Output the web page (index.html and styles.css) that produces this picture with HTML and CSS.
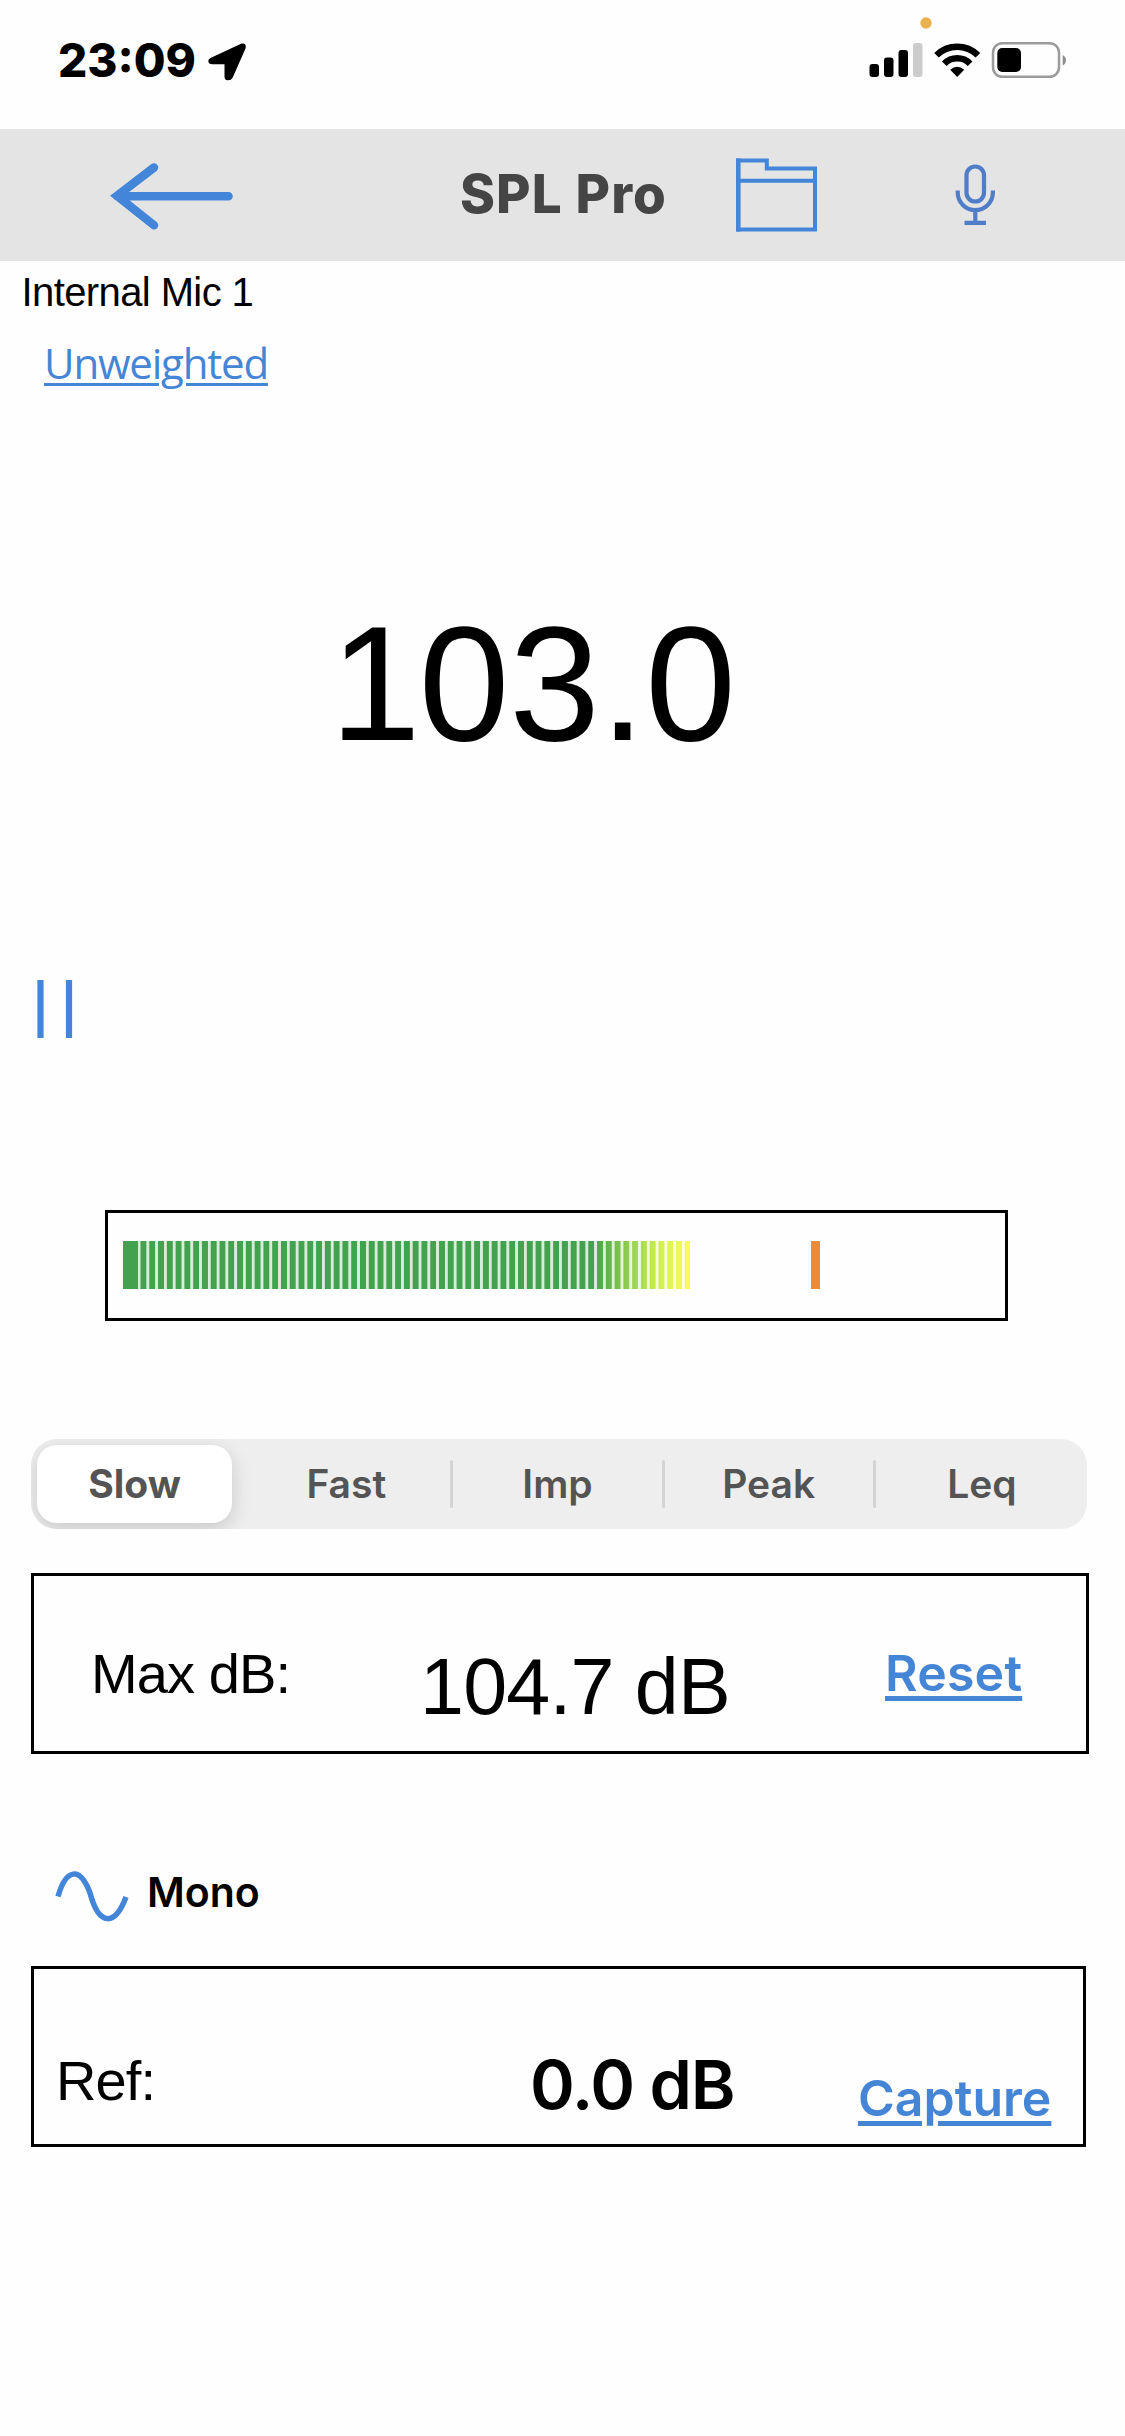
FILE: index.html
```html
<!DOCTYPE html>
<html lang="en">
<head>
    <meta charset="UTF-8">
    <meta name="viewport" content="width=device-width, initial-scale=1.0">
    <title>SPL Pro</title>
    <link rel="stylesheet" href="styles.css">
</head>
<body>
    <div class="status-bar">
        <span class="time">23:09</span>
        <svg class="location" width="38" height="38" viewBox="0 0 38 38">
            <path d="M2.5 15 L33 0.800 Q38.800 -1 37.500 5.500 L24.500 35 Q23 37.500 19.500 37.300 Q16.500 37 16.500 33.500 V21.300 H4.500 Q0.500 21.300 0.300 18 Q0.300 16 2.500 15 Z"/>
        </svg>
        <svg class="status-icons" width="200" height="66" viewBox="868 14 200 66">
            <circle cx="926" cy="23" r="5.700" fill="#ecb14f"/>
            <rect x="869.500" y="64" width="9.500" height="13" rx="3"/>
            <rect x="884" y="57.500" width="9.500" height="19.500" rx="3"/>
            <rect x="898.500" y="50" width="9.500" height="27" rx="3"/>
            <rect x="913" y="43" width="9.500" height="34" rx="3" fill="#cccccc"/>
            <g fill="none" stroke="#000" stroke-width="6.500">
                <path d="M936.500 55.300 A29.500 29.500 0 0 1 977.900 55.300"/>
                <path d="M944.300 63.700 A18 18 0 0 1 970.100 63.700"/>
            </g>
            <path d="M957.200 77 L950.200 69.800 Q957.200 63.500 964.200 69.800 Z"/>
            <rect x="993" y="43.200" width="66" height="33.600" rx="9.500" fill="none" stroke="#9b9b9b" stroke-width="2.500"/>
            <rect x="997.300" y="48" width="23.700" height="24" rx="5"/>
            <path d="M1062.700 55 Q1066 57 1066 60.300 Q1066 63.500 1062.700 65.500 Z" fill="#8e8e8e"/>
        </svg>
    </div>

    <header class="nav-bar">
        <svg class="back" width="124" height="68" viewBox="110 162 124 68">
            <path d="M117 196.300 H228.500 M154 167.500 L117 195.800 L154 225.300" fill="none" stroke="#4285d9" stroke-width="8.500" stroke-linecap="round" stroke-linejoin="miter"/>
        </svg>
        <h1>SPL Pro</h1>
        <svg class="folder" width="82" height="74" viewBox="736 158 82 74">
            <path d="M738 160.500 H766.800 V168.500 H815 V229.500 H738 Z M738 180.700 H815" fill="none" stroke="#4285d9" stroke-width="4"/>
            <path d="M738.300 158.500 V231.500" stroke="#4285d9" stroke-width="4.600"/>
        </svg>
        <svg class="mic" width="40" height="62" viewBox="955 163.500 40 62">
            <g fill="none" stroke="#507dc8" stroke-width="4.200">
                <rect x="966.500" y="166" width="17.500" height="35" rx="8.750"/>
                <path d="M957.700 190 V192 A17.600 17.600 0 0 0 992.900 192 V190 M975.300 209 V222 M964.500 222.300 H986"/>
            </g>
        </svg>
    </header>

    <main>
        <div class="input-name">Internal Mic 1</div>
        <div class="weighting"><a class="link">Unweighted</a></div>

        <div class="reading"><span class="lead">1</span>03.0</div>

        <svg class="pause" width="36" height="58" viewBox="0 0 36 58">
            <path d="M3.500 0 V58 M32 0 V58" stroke="#4285d9" stroke-width="6.200"/>
        </svg>

        <div class="meter">
            <div class="level"></div>
            <div class="peak"></div>
        </div>

        <div class="segments">
            <div class="segment selected">Slow</div>
            <div class="segment">Fast</div>
            <div class="segment divided">Imp</div>
            <div class="segment divided">Peak</div>
            <div class="segment divided">Leq</div>
        </div>

        <section class="panel max-panel">
            <span class="label">Max dB:</span>
            <span class="value">104.7 dB</span>
            <a class="link">Reset</a>
        </section>

        <div class="channel">
            <svg width="74" height="52" viewBox="55 1870 74 52">
                <path d="M58 1896.500 C66 1868.500 80 1866 90 1893 C99 1926.500 115 1926.500 126 1897" fill="none" stroke="#4285d9" stroke-width="5.500"/>
            </svg>
            <span>Mono</span>
        </div>

        <section class="panel ref-panel">
            <span class="label">Ref:</span>
            <span class="value">0.0 dB</span>
            <a class="link">Capture</a>
        </section>
    </main>
</body>
</html>
```
FILE: styles.css
```css
* {
    box-sizing: border-box;
}
body {
    margin: 0;
    width: 1125px;
    min-height: 2436px;
    background: #fefefe;
    color: #000;
    font-family: "Liberation Sans", Arial, sans-serif;
}
svg {
    display: block;
    flex: none;
}

/* Status bar */
.status-bar {
    display: flex;
    align-items: flex-start;
    height: 129px;
    padding-left: 58px;
}
.time {
    width: 150px;
    margin-top: 37px;
    font: 800 46px/46px Inter, sans-serif;
}
.location {
    margin-top: 43px;
}
.status-icons {
    margin: 14px 57px 0 auto;
}

/* Navigation bar */
.nav-bar {
    display: flex;
    align-items: center;
    height: 132px;
    padding-left: 110px;
    background: #e4e4e4;
}
.back {
    margin-top: 2px;
}
h1 {
    width: 276px;
    margin: 0 0 0 226px;
    padding-bottom: 3px;
    color: #454545;
    font: 800 53px/60px Inter, sans-serif;
    letter-spacing: 1.1px;
    white-space: nowrap;
}
.mic {
    margin-left: 137px;
}

.link {
    color: #4585d6;
    text-decoration: underline;
}
.input-name {
    padding-left: 21.5px;
    font-size: 40px;
    line-height: 62px;
    letter-spacing: -0.6px;
}
.weighting {
    padding-left: 44px;
    font: 500 42px/79px "Open Sans", sans-serif;
    letter-spacing: -1.2px;
}
.weighting .link {
    text-decoration-thickness: 3px;
    text-underline-offset: 4px;
}
.reading {
    padding-left: 330px;
    font-size: 163px;
    line-height: 563px;
}
.reading .lead {
    letter-spacing: -2px;
}
.pause {
    margin: 15px 0 0 37px;
}

/* Level meter */
.meter {
    display: flex;
    width: 903px;
    height: 111px;
    margin: 172px 0 0 105px;
    padding: 28px 15px;
    border: 3px solid #000;
}
.level {
    width: 567px;
    height: 48px;
    background:
        repeating-linear-gradient(90deg, rgba(255, 255, 255, 0.8) 0 2px, transparent 3px 8px, rgba(255, 255, 255, 0.8) 8.78px) 14.500px 0 no-repeat,
        linear-gradient(90deg, #43a24d 0 470px, #a0d84f 513px, #d8f352 541px, #fdfd55 567px);
}
.peak {
    width: 9px;
    height: 48px;
    margin-left: 121px;
    background: #ec8a38;
}

/* Response selector */
.segments {
    display: grid;
    grid-template-columns: repeat(5, 1fr);
    width: 1056px;
    height: 90px;
    margin: 118px 0 0 31px;
    border-radius: 26px;
    overflow: hidden;
    background: #eeeeee;
}
.segment {
    position: relative;
    padding-right: 3px;
    color: #545454;
    font: 600 39px/90px Inter, sans-serif;
    text-align: center;
}
.segment:last-child {
    padding: 0 0 0 1px;
}
.segment.selected {
    height: 78px;
    margin: 6px 10px 6px 6px;
    padding: 0;
    border-radius: 20px;
    background: #fff;
    box-shadow: 0 6px 20px rgba(0, 0, 0, 0.16);
    font-weight: 700;
    line-height: 78px;
}
.segment.divided::before {
    content: "";
    position: absolute;
    top: 21px;
    left: -3px;
    width: 3px;
    height: 48px;
    border-radius: 2px;
    background: #d4d4d4;
}

/* Bordered panels */
.panel {
    display: grid;
    align-items: start;
    height: 181px;
    margin-left: 31px;
    border: 3px solid #000;
    white-space: nowrap;
}
.panel .label {
    font-size: 56px;
    line-height: 56px;
    letter-spacing: -0.9px;
}
.panel .link {
    font: 600 50px/50px Inter, sans-serif;
    text-decoration-thickness: 5px;
    text-underline-offset: 5px;
}
.max-panel {
    grid-template-columns: 324px 470px auto;
    width: 1058px;
    margin-top: 44px;
    padding: 70px 0 0 57px;
}
.max-panel .value {
    margin: 1px 0 0 5px;
    font-size: 79px;
    line-height: 79px;
    letter-spacing: -0.8px;
}
.max-panel .link {
    margin-top: 2px;
    letter-spacing: 0.2px;
}
.channel {
    display: flex;
    height: 212px;
    padding: 116px 0 0 55px;
}
.channel span {
    margin-left: 18px;
    font: 600 41px/44px Inter, sans-serif;
}
.ref-panel {
    grid-template-columns: 474px 328px auto;
    width: 1055px;
    padding: 81px 0 0 22px;
}
.ref-panel .label {
    margin-top: 3px;
}
.ref-panel .value {
    font: 600 68px/68px Inter, sans-serif;
    letter-spacing: -1.3px;
}
.ref-panel .link {
    margin-top: 23px;
}
```
